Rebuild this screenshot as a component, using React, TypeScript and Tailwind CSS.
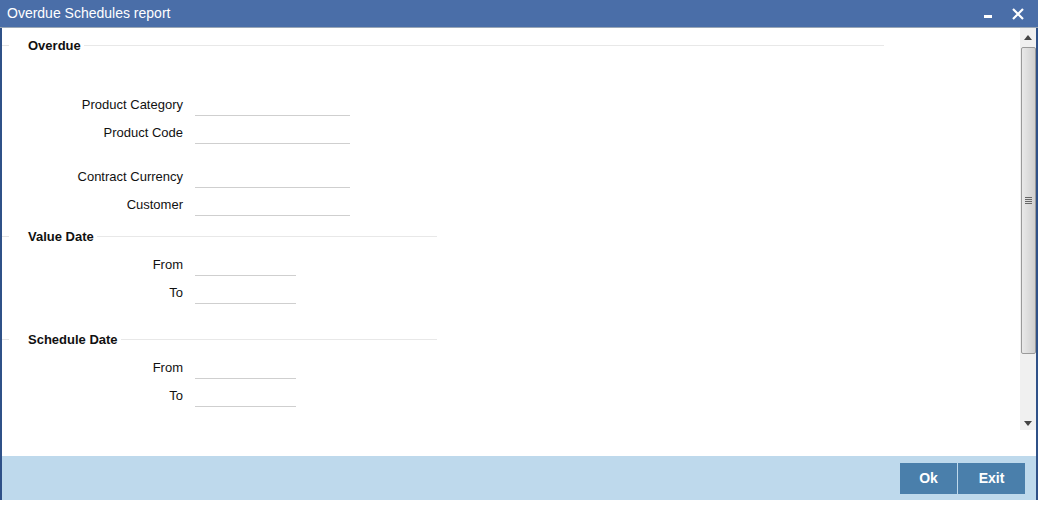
import React from "react";

const font = { fontFamily: '"Liberation Sans", Arial, sans-serif' };

function Legend({ title, width }: { title: string; width: string }) {
  return (
    <div className={`flex h-[18px] items-center ${width}`}>
      <div className="mb-[2px] h-px w-[7px] bg-[#e4e4e4]" />
      <div className="ml-[19px] pr-[3px] text-[13px] font-bold text-[#111]">{title}</div>
      <div className="mb-[2px] h-px flex-1 bg-[#e8e8e8]" />
    </div>
  );
}

function Row({ label, wide }: { label: string; wide?: boolean }) {
  return (
    <div className="flex h-[28px] items-center">
      <div className="w-[181px] text-right text-[13px] text-[#111]">{label}</div>
      <div className={`ml-[12px] h-[22px] border-b border-[#cfcfcf] ${wide ? "w-[155px]" : "w-[101px]"}`} />
    </div>
  );
}

function Scrollbar() {
  return (
    <div className="flex h-[402px] w-[16px] flex-col items-center bg-[#f0f0f0]">
      <div className="flex h-[19px] w-full items-center justify-center">
        <svg width="8" height="5" viewBox="0 0 8 5">
          <path d="M4 0 L8 5 L0 5 Z" fill="#444" />
        </svg>
      </div>
      <div className="flex h-[307px] w-[15px] items-center justify-center rounded-[2px] border border-[#9a9a9a] bg-gradient-to-r from-[#e9e9e9] via-[#dcdcdc] to-[#cfcfcf]">
        <div className="flex flex-col gap-[1px]">
          <div className="h-px w-[7px] bg-[#666]" />
          <div className="h-px w-[7px] bg-[#666]" />
          <div className="h-px w-[7px] bg-[#666]" />
          <div className="h-px w-[7px] bg-[#666]" />
        </div>
      </div>
      <div className="flex-1" />
      <div className="flex h-[14px] w-full items-center justify-center">
        <svg width="8" height="5" viewBox="0 0 8 5">
          <path d="M0 0 L8 0 L4 5 Z" fill="#444" />
        </svg>
      </div>
    </div>
  );
}

export default function App() {
  return (
    <div className="h-[508px] w-[1038px] bg-white" style={font}>
      <div className="flex h-[500px] w-[1038px] flex-col">
        {/* Title bar */}
        <div className="flex h-[27px] items-center justify-between bg-[#4a6ea8] pl-[7px] pr-[14px]">
          <span className="text-[14px] text-white">Overdue Schedules report</span>
          <div className="flex items-center gap-[20px]">
            <div className="mt-[5px] h-[3px] w-[8px] bg-white" />
            <svg width="12" height="12" viewBox="0 0 12 12">
              <path d="M1 1 L11 11 M11 1 L1 11" stroke="white" strokeWidth="2.2" />
            </svg>
          </div>
        </div>
        <div className="h-px bg-[#9aa7b6]" />
        {/* Body */}
        <div className="flex flex-1 flex-col border-x-2 border-[#2f5188]">
          <div className="flex h-[428px] items-start">
            <div className="flex-1 pt-[9px]">
              <Legend title="Overdue" width="w-[882px]" />
              <div className="mt-[36px]">
                <Row label="Product Category" wide />
                <Row label="Product Code" wide />
                <div className="h-[16px]" />
                <Row label="Contract Currency" wide />
                <Row label="Customer" wide />
              </div>
              <div className="mt-[9px]">
                <Legend title="Value Date" width="w-[435px]" />
              </div>
              <div className="mt-[5px]">
                <Row label="From" />
                <Row label="To" />
              </div>
              <div className="mt-[24px]">
                <Legend title="Schedule Date" width="w-[435px]" />
              </div>
              <div className="mt-[5px]">
                <Row label="From" />
                <Row label="To" />
              </div>
            </div>
            <Scrollbar />
          </div>
          {/* Footer */}
          <div className="flex flex-1 items-center justify-end bg-[#bed9ec] pr-[11px]">
            <div className="flex gap-px">
              <button className="h-[31px] w-[57px] bg-[#4a7fab] text-[14px] font-bold text-white">Ok</button>
              <button className="h-[31px] w-[67px] bg-[#4a7fab] text-[14px] font-bold text-white">Exit</button>
            </div>
          </div>
        </div>
      </div>
    </div>
  );
}
